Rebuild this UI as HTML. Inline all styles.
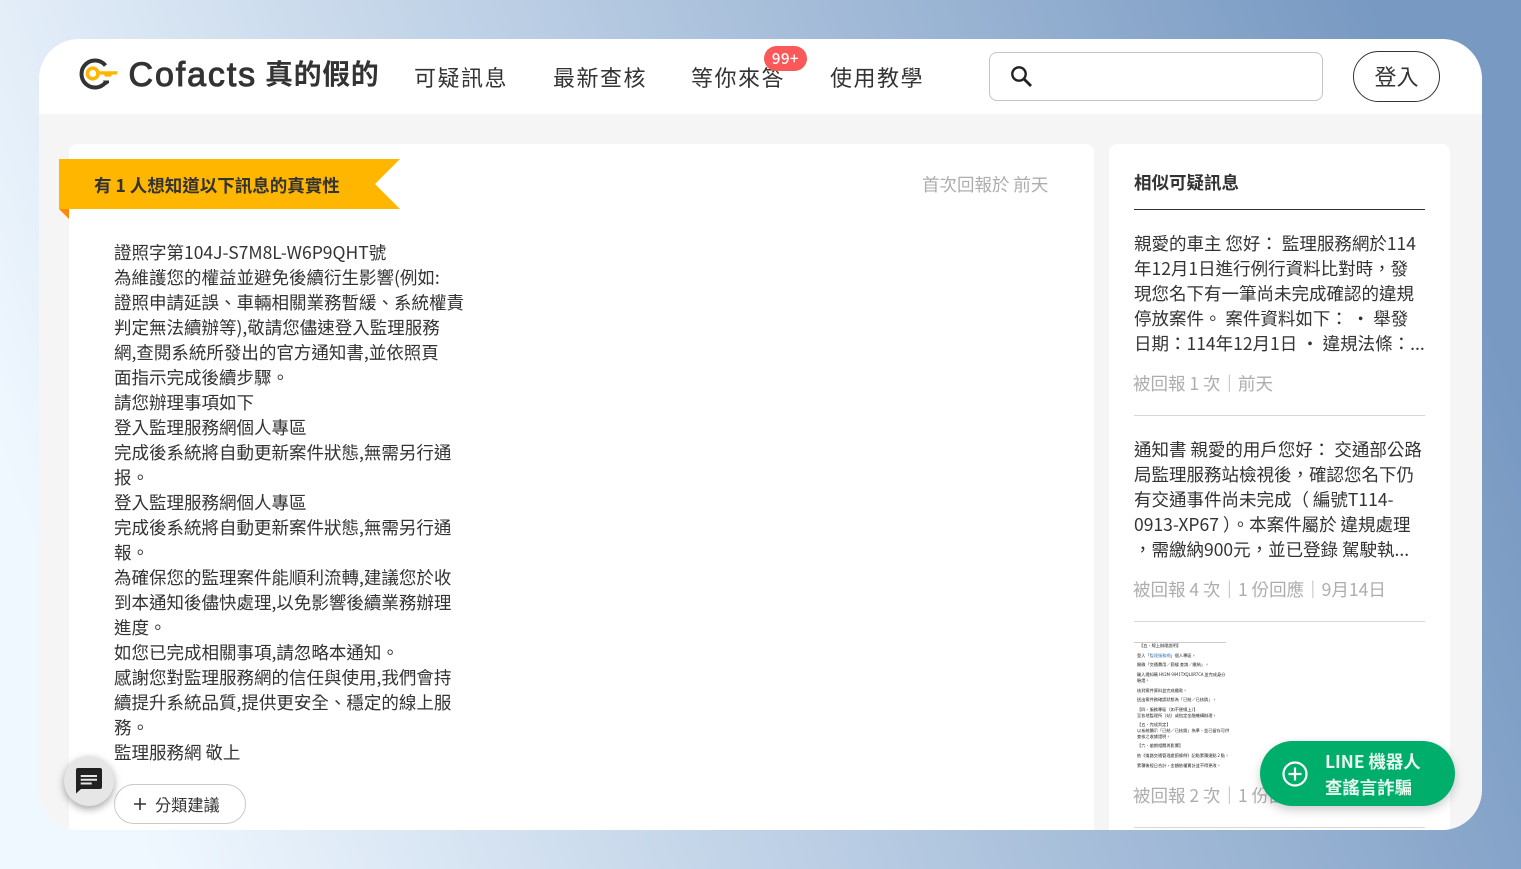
<!DOCTYPE html>
<html lang="zh-Hant"><head><meta charset="utf-8"><title>Cofacts</title>
<style>
*{box-sizing:border-box}
html,body{margin:0;padding:0;width:1521px;height:869px;overflow:hidden}
body{position:relative;background:linear-gradient(70deg,#f0f8ff 8%,#7899c2 92%);font-family:"Noto Sans CJK TC","Liberation Sans",sans-serif;color:#333}
.a{position:absolute;white-space:nowrap}
#win{position:absolute;left:39px;top:39px;width:1443px;height:791px;border-radius:40px;overflow:hidden;background:#f5f5f5}
#hdr{position:absolute;left:0;top:0;width:1443px;height:75px;background:#fff}
.nav{position:absolute;top:23px;font-size:22px;line-height:30px;color:#333;letter-spacing:1.5px;white-space:nowrap}
#card1{position:absolute;left:30px;top:105px;width:1025px;height:720px;background:#fff;border-radius:8px 8px 0 0}
#card2{position:absolute;left:1070px;top:105px;width:341px;height:720px;background:#fff;border-radius:8px 8px 0 0}
#msg{position:absolute;left:75px;top:201px;font-size:17.5px;line-height:25px;color:#333;white-space:nowrap}
.item{position:absolute;left:1095px;width:292px;font-size:17.5px;line-height:25px;color:#333;white-space:nowrap}
.meta{position:absolute;left:1094px;font-size:17.5px;line-height:25px;color:#adadad;white-space:nowrap}
.hr{position:absolute;left:1095px;width:291px;height:1px;background:#d6d6d6}
.mini{position:absolute;font-size:4.2px;line-height:6px;color:#222;white-space:nowrap;filter:blur(.25px)}
</style></head><body>
<div id="win">
 <div id="hdr"></div>
 <svg class="a" style="left:40px;top:19px" width="40" height="32" viewBox="0 0 40 32">
  <path d="M26.500 7.500A13.500 13.500 0 1 0 26.500 24.500" fill="none" stroke="#333" stroke-width="4"/>
  <path d="M24 22.500h6v2.500l-3 2z" fill="#333"/>
  <circle cx="13.700" cy="15.500" r="5.300" fill="none" stroke="#ffb600" stroke-width="3.600"/>
  <path d="M20 13.200h19l-1.500 3.400h-4.500l-1 2h-6l-1-2h-5z" fill="#ffb600"/>
 </svg>
 <div class="a" style="left:89.500px;top:14.500px;font-family:'Liberation Sans',sans-serif;font-size:34px;line-height:42px;color:#333;letter-spacing:1.900px;-webkit-text-stroke:1px #333">Cofacts</div>
 <div class="a" style="left:226px;top:14px;font-size:28px;line-height:40px;font-weight:700;color:#333;letter-spacing:.6px">真的假的</div>
 <div class="nav" style="left:375px">可疑訊息</div>
 <div class="nav" style="left:514px">最新查核</div>
 <div class="nav" style="left:652px">等你來答</div>
 <div class="a" style="left:725px;top:7px;width:43px;height:25px;background:#fb5959;border-radius:13px;color:#fff;font-size:15px;line-height:25px;text-align:center;font-weight:500;letter-spacing:.5px">99+</div>
 <div class="nav" style="left:791px">使用教學</div>
 <div class="a" style="left:950px;top:13px;width:334px;height:49px;border:1px solid #c4c4c4;border-radius:8px;background:#fff"></div>
 <svg class="a" style="left:968px;top:24px" width="28" height="28" viewBox="0 0 28 28"><circle cx="12" cy="11" r="6.700" fill="none" stroke="#222" stroke-width="2.400"/><path d="M17 16l7 7" stroke="#222" stroke-width="2.800" fill="none"/></svg>
 <div class="a" style="left:1314px;top:12px;width:87px;height:51px;border:1px solid #333;border-radius:26px;background:#fff;font-size:22px;line-height:49px;text-align:center;color:#333">登入</div>

 <div id="card1"></div>
 <div id="card2"></div>

 <div class="a" style="left:20px;top:120px;width:341px;height:50px;background:#ffb600;clip-path:polygon(0 0,100% 0,316px 50%,100% 100%,0 100%)"></div>
 <div class="a" style="left:20px;top:170px;width:10px;height:10px;background:#ff8a00;clip-path:polygon(0 0,100% 0,100% 100%)"></div>
 <div class="a" style="left:55px;top:133px;font-size:17.5px;line-height:27px;font-weight:700;color:#333">有 1 人想知道以下訊息的真實性</div>
 <div class="a" style="left:883px;top:132px;font-size:17.5px;line-height:27px;color:#adadad">首次回報於 前天</div>

 <div id="msg">證照字第104J-S7M8L-W6P9QHT號<br>為維護您的權益並避免後續衍生影響(例如:<br>證照申請延誤、車輛相關業務暫緩、系統權責<br>判定無法續辦等),敬請您儘速登入監理服務<br>網,查閱系統所發出的官方通知書,並依照頁<br>面指示完成後續步驟。<br>請您辦理事項如下<br>登入監理服務網個人專區<br>完成後系統將自動更新案件狀態,無需另行通<br>报。<br>登入監理服務網個人專區<br>完成後系統將自動更新案件狀態,無需另行通<br>報。<br>為確保您的監理案件能順利流轉,建議您於收<br>到本通知後儘快處理,以免影響後續業務辦理<br>進度。<br>如您已完成相關事項,請忽略本通知。<br>感謝您對監理服務網的信任與使用,我們會持<br>續提升系統品質,提供更安全、穩定的線上服<br>務。<br>監理服務網 敬上</div>

 <div class="a" style="left:75px;top:745px;width:132px;height:40px;border:1px solid #c9c9c9;border-radius:20px;background:#fff"></div>
 <svg class="a" style="left:93px;top:757px" width="16" height="16" viewBox="0 0 16 16"><path d="M8 2v12M2 8h12" stroke="#333" stroke-width="1.600"/></svg>
 <div class="a" style="left:116px;top:752px;font-size:16.2px;line-height:26px;color:#333">分類建議</div>

 <div class="a" style="left:1095px;top:130px;font-size:17.5px;line-height:27px;font-weight:700;color:#333">相似可疑訊息</div>
 <div class="a" style="left:1095px;top:170px;width:291px;height:1px;background:#333"></div>

 <div class="item" style="top:192px">親愛的車主 您好： 監理服務網於114<br>年12月1日進行例行資料比對時，發<br>現您名下有一筆尚未完成確認的違規<br>停放案件。 案件資料如下： ・ 舉發<br>日期：114年12月1日 ・ 違規法條：...</div>
 <div class="meta" style="top:332px">被回報 1 次｜前天</div>
 <div class="hr" style="top:376px"></div>

 <div class="item" style="top:398px">通知書 親愛的用戶您好： 交通部公路<br>局監理服務站檢視後，確認您名下仍<br>有交通事件尚未完成（ 編號T114-<br>0913-XP67 ）。本案件屬於 違規處理<br>，需繳納900元，並已登錄 駕駛執...</div>
 <div class="meta" style="top:538px">被回報 4 次｜1 份回應｜9月14日</div>
 <div class="hr" style="top:582px"></div>

 <div class="a" style="left:1095px;top:603px;width:92px;height:1px;background:#ccc"></div>
 <div class="mini" style="left:1100px;top:604px">【五、線上辦理說明】</div>
 <div class="mini" style="left:1098px;top:614px">登入「<span style="color:#3b78b8">監理服務網</span>」個人專區。</div>
 <div class="mini" style="left:1098px;top:623px">開啟「交通費用／罰緩 查詢／繳納」。</div>
 <div class="mini" style="left:1098px;top:633px">輸入通知碼 HV2M-9941TXQL0R7CA 並完成身分<br>驗證。</div>
 <div class="mini" style="left:1098px;top:649px">核對案件資料並完成繳款。</div>
 <div class="mini" style="left:1098px;top:658px">送出案件務確認狀態為「已結／已核銷」。</div>
 <div class="mini" style="left:1098px;top:668px;line-height:6px">【四、服務專區（如不便線上）】<br>至各地監理所（站）或指定金融機構辦理。</div>
 <div class="mini" style="left:1098px;top:683px;line-height:6px">【五、完成判定】<br>以系統顯示「已結／已核銷」為準，並已留存可供<br>查核之收據證明。</div>
 <div class="mini" style="left:1098px;top:704px">【六、逾期相關與影響】</div>
 <div class="mini" style="left:1098px;top:714px">依《道路交通管理處罰條例》記點累積達點 2 點。</div>
 <div class="mini" style="left:1098px;top:724px">累積後經日合計，金額依權責計並不得更改。</div>

 <div class="meta" style="top:744px">被回報 2 次｜1 份回應</div>
 <div class="hr" style="top:788px"></div>
</div>

<div class="a" style="left:64px;top:756px;width:50px;height:50px;border-radius:50%;background:#e6e6e6;box-shadow:0 3px 8px rgba(0,0,0,.35)"></div>
<svg class="a" style="left:76px;top:768px" width="26" height="26" viewBox="0 0 26 26"><path d="M0 2a2 2 0 0 1 2-2h22a2 2 0 0 1 2 2v17a2 2 0 0 1-2 2H5l-5 4.500z" fill="#212121"/><path d="M4.700 8h16.300M4.700 11.800h16.300M4.700 15.500h11" stroke="#e6e6e6" stroke-width="2"/></svg>

<div class="a" style="left:1260px;top:741px;width:195px;height:65px;border-radius:33px;background:#00ae6c;box-shadow:0 4px 10px rgba(0,0,0,.2)"></div>
<svg class="a" style="left:1281px;top:760px" width="28" height="28" viewBox="0 0 28 28"><circle cx="14" cy="14" r="11.500" fill="none" stroke="#fff" stroke-width="2.200"/><path d="M14 7.500v13M7.500 14h13" stroke="#fff" stroke-width="2.200"/></svg>
<div class="a" style="left:1325px;top:749px;font-size:17.4px;line-height:26px;font-weight:700;color:#e9f8f1">LINE 機器人<br>查謠言詐騙</div>
</body></html>
